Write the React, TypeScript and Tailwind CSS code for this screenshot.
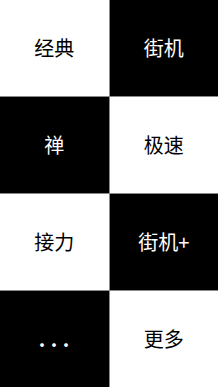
const cells = [
  { label: "经典", dark: false },
  { label: "街机", dark: true },
  { label: "禅", dark: true },
  { label: "极速", dark: false },
  { label: "接力", dark: false },
  { label: "街机+", dark: true },
  { label: "...", dark: true, dots: true },
  { label: "更多", dark: false },
];

export default function App() {
  return (
    <div
      className="grid h-[387px] w-[218px] grid-cols-2 grid-rows-4 gap-px bg-[#8a8a8a]"
      style={{ fontFamily: '"Noto Sans CJK SC", "Noto Sans", sans-serif' }}
    >
      {cells.map((c) => (
        <div
          key={c.label}
          className={`flex items-center justify-center text-[20px] ${
            c.dark ? "bg-black text-white" : "bg-white text-black"
          }`}
        >
          {c.dots ? (
            <span className="pl-[5px] font-bold tracking-[5.5px]">{c.label}</span>
          ) : (
            c.label
          )}
        </div>
      ))}
    </div>
  );
}
